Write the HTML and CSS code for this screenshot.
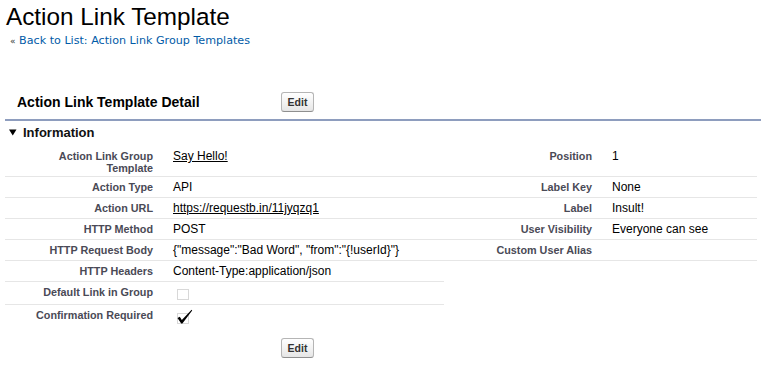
FILE: index.html
```html
<!DOCTYPE html>
<html>
<head>
<meta charset="utf-8">
<link rel="stylesheet" href="styles.css">
</head>
<body>
<div class="page">
  <div class="pt-header">
    <h1 class="page-type">Action Link Template</h1>
    <div class="back-link"><span class="raquo">«</span> <a href="#">Back to List: Action Link Group Templates</a></div>
  </div>
  <div class="block">
    <div class="pb-header">
      <h2 class="pb-title">Action Link Template Detail</h2>
      <button class="btn">Edit</button>
    </div>
    <div class="pb-body">
      <h3 class="subhead"><svg class="tri" width="8" height="7" viewBox="0 0 8 7"><polygon points="0,0.5 7.5,0.5 3.75,6.5" fill="#000"/></svg>Information</h3>
      <table class="detail-list">
        <colgroup><col class="c1"><col class="c2"><col class="c3"><col class="c4"></colgroup>
        <tr>
          <td class="label">Action Link Group Template</td>
          <td class="data"><a class="dlink" href="#">Say Hello!</a></td>
          <td class="label">Position</td>
          <td class="data">1</td>
        </tr>
        <tr>
          <td class="label">Action Type</td>
          <td class="data">API</td>
          <td class="label">Label Key</td>
          <td class="data">None</td>
        </tr>
        <tr>
          <td class="label">Action URL</td>
          <td class="data"><a class="dlink" href="#">https://requestb.in/11jyqzq1</a></td>
          <td class="label">Label</td>
          <td class="data">Insult!</td>
        </tr>
        <tr>
          <td class="label">HTTP Method</td>
          <td class="data">POST</td>
          <td class="label">User Visibility</td>
          <td class="data">Everyone can see</td>
        </tr>
        <tr>
          <td class="label">HTTP Request Body</td>
          <td class="data">{"message":"Bad Word", "from":"{!userId}"}</td>
          <td class="label">Custom User Alias</td>
          <td class="data"></td>
        </tr>
        <tr>
          <td class="label">HTTP Headers</td>
          <td class="data">Content-Type:application/json</td>
          <td class="empty"></td>
          <td class="empty"></td>
        </tr>
        <tr>
          <td class="label">Default Link in Group</td>
          <td class="data check-cell"><svg class="cb" width="21" height="19" viewBox="0 0 21 19"><rect x="4.5" y="4.5" width="11" height="10" fill="none" stroke="#b0b0b0" stroke-dasharray="1 1"/></svg></td>
          <td class="empty"></td>
          <td class="empty"></td>
        </tr>
        <tr class="last">
          <td class="label">Confirmation Required</td>
          <td class="data check-cell"><svg class="cb" width="21" height="19" viewBox="0 0 21 19"><rect x="4.5" y="5.5" width="11" height="10" fill="none" stroke="#b0b0b0" stroke-dasharray="1 1"/><path d="M4.5 10 L6.8 8.8 L8.8 12 L18.6 1.8 L19.2 2.4 L9.4 15.6 L8.2 15.6 Z" fill="#000"/></svg></td>
          <td class="empty"></td>
          <td class="empty"></td>
        </tr>
      </table>
    </div>
    <div class="pb-bottom">
      <div class="pb-spacer"></div>
      <button class="btn">Edit</button>
    </div>
  </div>
</div>
</body>
</html>
```

FILE: styles.css
```css
html, body {
  margin: 0;
  padding: 0;
  background: #fff;
}
body {
  font-family: "Liberation Sans", Arial, sans-serif;
  color: #000;
}
.page {
  padding: 0 0 0 5px;
}
.pt-header {
  padding-left: 1px;
}
.page-type {
  margin: 0;
  padding-top: 3px;
  font-size: 24.3px;
  line-height: 28px;
  font-weight: normal;
  color: #000;
}
.back-link {
  margin-top: 3px;
  padding-left: 4px;
  font-family: Verdana, "DejaVu Sans", sans-serif;
  font-size: 11.15px;
  line-height: 14px;
}
.raquo {
  color: #333;
  font-size: 9px;
}
.back-link a {
  color: #015ba7;
  text-decoration: none;
}
.block {
  margin-top: 44px;
}
.pb-header {
  display: flex;
  align-items: center;
  padding: 0 0 7px 12px;
  border-bottom: 2px solid #8e9dbe;
}
.pb-title {
  margin: 0;
  width: 264px;
  font-size: 14px;
  line-height: 20px;
  font-weight: bold;
  color: #000;
}
.btn {
  box-sizing: border-box;
  height: 20px;
  width: 33px;
  padding: 0;
  margin: 0;
  border: 1px solid #b5b5b5;
  border-bottom-color: #8f8f8f;
  border-radius: 3px;
  background: linear-gradient(#ffffff, #f3f3f3 50%, #e6e6e6);
  font-family: "Liberation Sans", Arial, sans-serif;
  font-size: 10.5px;
  font-weight: bold;
  color: #333;
  line-height: 18px;
}
.subhead {
  display: flex;
  align-items: center;
  margin: 0 0 5px 0;
  padding: 4px 0 0 4px;
  font-size: 13px;
  line-height: 16px;
  font-weight: bold;
  color: #111;
}
.tri {
  display: block;
  margin-right: 6px;
  margin-top: -1px;
}
.detail-list {
  table-layout: fixed;
  border-collapse: collapse;
  width: 752px;
}
.c1 { width: 158px; }
.c2 { width: 281px; }
.c3 { width: 158px; }
.c4 { width: 155px; }
.detail-list td {
  vertical-align: top;
  border-bottom: 1px solid #e6e6e6;
  padding: 0;
}
.detail-list tr.last td,
.detail-list td.empty {
  border-bottom: none;
}
.label {
  text-align: right;
  padding: 4px 10px 2px 12px !important;
  font-size: 10.8px;
  line-height: 12px;
  font-weight: bold;
  color: #4a4a56;
}
.data {
  padding: 3px 2px 3px 10px !important;
  font-size: 12px;
  line-height: 14px;
  color: #000;
}
.check-cell {
  padding: 3px 2px 0 0 !important;
}
.cb {
  display: block;
  margin-left: 10px;
}
.dlink {
  color: #000;
  text-decoration: underline;
}
.pb-bottom {
  display: flex;
  padding: 11px 0 0 12px;
}
.pb-spacer {
  width: 264px;
}
```
